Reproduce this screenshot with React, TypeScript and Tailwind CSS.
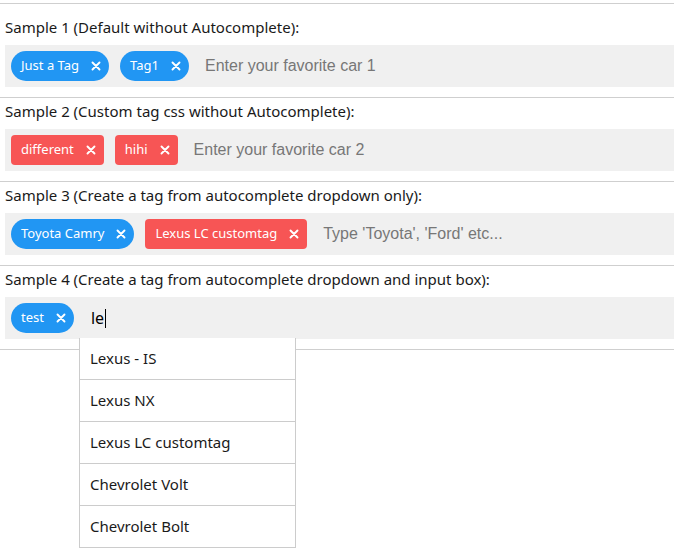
import * as React from 'react';

type TagStyle = 'pill' | 'box';

function CloseIcon() {
  return (
    <svg width="10" height="10" viewBox="0 0 10 10" className="shrink-0">
      <path d="M1.5 1.5 L8.5 8.5 M8.5 1.5 L1.5 8.5" stroke="white" strokeWidth="1.9" strokeLinecap="round" />
    </svg>
  );
}

function Tag({ label, kind }: { label: string; kind: TagStyle }) {
  const shape =
    kind === 'pill' ? 'rounded-full bg-[#2196f3]' : 'rounded-[4px] bg-[#f75555]';
  return (
    <div
      className={`mr-[11px] flex h-[30px] shrink-0 items-center gap-[12px] pl-[10px] pr-[8px] text-[13px] text-white ${shape}`}
    >
      <span>{label}</span>
      <CloseIcon />
    </div>
  );
}

type Sample = {
  title: string;
  tags: { label: string; kind: TagStyle }[];
  placeholder?: string;
  value?: string;
};

const samples: Sample[] = [
  {
    title: 'Sample 1 (Default without Autocomplete):',
    tags: [
      { label: 'Just a Tag', kind: 'pill' },
      { label: 'Tag1', kind: 'pill' },
    ],
    placeholder: 'Enter your favorite car 1',
  },
  {
    title: 'Sample 2 (Custom tag css without Autocomplete):',
    tags: [
      { label: 'different', kind: 'box' },
      { label: 'hihi', kind: 'box' },
    ],
    placeholder: 'Enter your favorite car 2',
  },
  {
    title: 'Sample 3 (Create a tag from autocomplete dropdown only):',
    tags: [
      { label: 'Toyota Camry', kind: 'pill' },
      { label: 'Lexus LC customtag', kind: 'box' },
    ],
    placeholder: "Type 'Toyota', 'Ford' etc...",
  },
  {
    title: 'Sample 4 (Create a tag from autocomplete dropdown and input box):',
    tags: [{ label: 'test', kind: 'pill' }],
    value: 'le',
  },
];

const suggestions = ['Lexus - IS', 'Lexus NX', 'Lexus LC customtag', 'Chevrolet Volt', 'Chevrolet Bolt'];

function Dropdown() {
  return (
    <div className="absolute left-[74px] top-[41px] z-10 w-[217px] border-x border-[#cccccc] bg-white">
      {suggestions.map((s) => (
        <div
          key={s}
          className="flex h-[42px] items-center border-b border-[#cccccc] pl-[10px] text-[15px] text-[#1a1a1a]"
        >
          {s}
        </div>
      ))}
    </div>
  );
}

function Divider() {
  return <div className="h-px bg-[#cfcfcf]" />;
}

export default function App() {
  return (
    <div className="min-h-[556px] bg-white pt-[3px] font-['Segoe_UI','Noto_Sans',sans-serif] text-[#1a1a1a]">
      <Divider />
      {samples.map((s, i) => (
        <React.Fragment key={s.title}>
          <div
            className={`pl-[5px] pb-[7px] text-[15px] leading-[22px] ${i === 0 ? 'pt-[12px]' : 'pt-[2px]'}`}
          >
            {s.title}
          </div>
          <div className="relative mb-[10px] ml-[5px] flex h-[42px] items-center bg-[#f0f0f0] pl-[6px]">
            {s.tags.map((t) => (
              <Tag key={t.label} label={t.label} kind={t.kind} />
            ))}
            {s.placeholder ? (
              <span className="ml-[5px] font-['Liberation_Sans',Arial,sans-serif] text-[16px] text-[#777777]">
                {s.placeholder}
              </span>
            ) : (
              <span className="ml-[6px] flex items-center text-[16px] text-black">
                {s.value}
                <span className="ml-px inline-block h-[19px] w-px bg-black" />
              </span>
            )}
            {s.value ? <Dropdown /> : null}
          </div>
          <Divider />
        </React.Fragment>
      ))}
    </div>
  );
}
